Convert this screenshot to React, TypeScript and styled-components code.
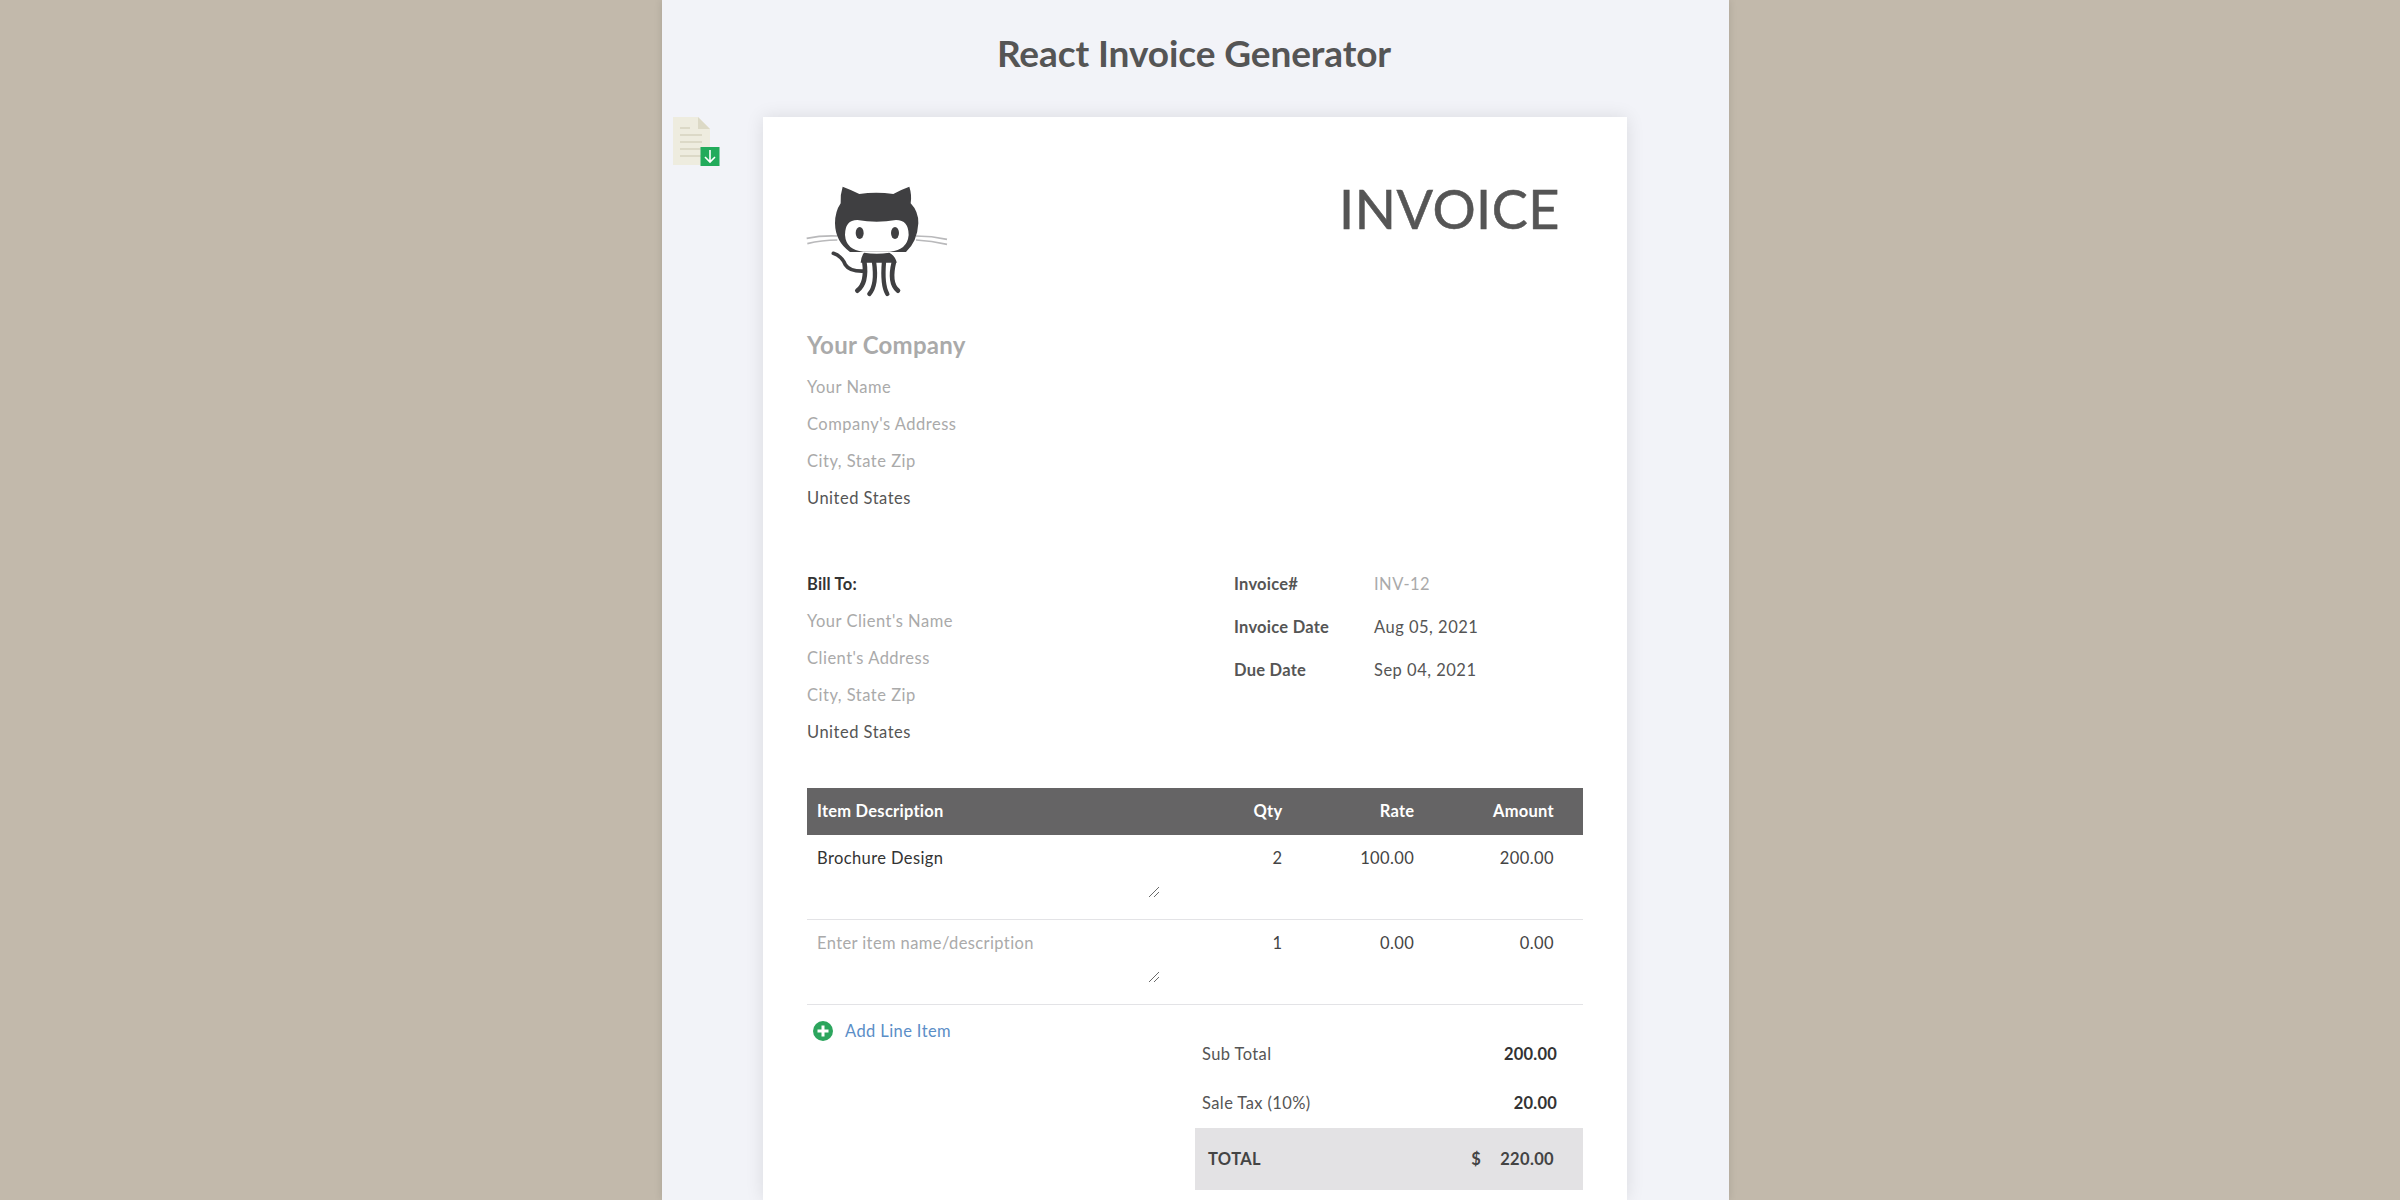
import React from 'react';
import styled, { createGlobalStyle } from 'styled-components';

const Global = createGlobalStyle`
  html, body { margin: 0; padding: 0; height: 1200px; overflow: hidden; background: #c2b9ab; }
  body { font-family: Lato, "Noto Sans", "Liberation Sans", sans-serif; color: #555; }
  * { box-sizing: border-box; }
`;
const Shell = styled.div`height: 1200px; display: flex; justify-content: center; overflow: hidden; padding-right: 9px;`;
const Column = styled.main`
  position: relative; width: 1067px; height: 1200px; background: #f2f3f8;
  box-shadow: 0 0 8px rgba(0,0,0,.12); display: flex; flex-direction: column; align-items: center;
`;
const Title = styled.h1`margin: 0; height: 117px; padding: 31px 3px 0 0; font-size: 37px; line-height: 44px; font-weight: 700; color: #555; letter-spacing: -.1px;`;
const Download = styled.svg`position: absolute; left: 11px; top: 117px;`;
const Page = styled.section`
  width: 864px; flex: 1; margin-right: 1px; background: #fff; padding: 68px 44px 0; box-shadow: 0 0 17px rgba(0,0,0,.1);
  letter-spacing: .4px;
`;
const Top = styled.div`display: flex; justify-content: space-between; align-items: flex-start; height: 143px;`;
const Big = styled.div`font-size: 54px; line-height: 70px; color: #555; padding-right: 23px; margin-top: -11px; letter-spacing: .5px; -webkit-text-stroke: .6px #555;`;
const Company = styled.div`font-size: 24px; line-height: 30px; font-weight: 700; color: #aaa; height: 41px; padding-top: 2px; letter-spacing: .25px;`;
const Line = styled.div<{ $dark?: boolean; $bold?: boolean }>`
  font-size: 16.5px; line-height: 37px; height: 37px; font-weight: ${p => p.$bold ? 700 : 400};
  letter-spacing: ${p => p.$bold ? '.2px' : '.5px'};
  color: ${p => p.$bold ? '#333' : p.$dark ? '#555' : '#aaa'};
`;
const BillGrid = styled.div`display: grid; grid-template-columns: 427px 1fr; margin-top: 49px;`;
const Meta = styled.div`display: grid; grid-template-columns: 140px 1fr; grid-auto-rows: 43px; align-items: center; margin-top: -4px;`;
const MetaLabel = styled.div`font-size: 16.5px; font-weight: 700; color: #555; letter-spacing: .25px;`;
const MetaValue = styled.div<{ $muted?: boolean }>`font-size: 16.5px; letter-spacing: .5px; color: ${p => p.$muted ? '#aaa' : '#555'};`;
const TableHead = styled.div`
  display: grid; grid-template-columns: 48% 17% 17% 18%; height: 47px; margin-top: 37px; background: #656465;
  align-items: center; color: #fff; font-size: 16.5px; font-weight: 700; letter-spacing: .25px; padding-bottom: 1px;
`;
const Row = styled.div`display: grid; grid-template-columns: 48% 17% 17% 18%; height: 85px; border-bottom: 1px solid #e3e3e6; font-size: 16.5px;`;
const LeftCell = styled.div`padding-left: 10px;`;
const RightCell = styled.div`text-align: right; padding: 12px 29px 0 0; line-height: 22px; color: #444;`;
const HeadRight = styled.div`text-align: right; padding-right: 29px;`;
const Desc = styled.div<{ $muted?: boolean }>`
  position: relative; width: 354px; height: 58px; margin-top: 7px; padding: 5px 0 0 10px; line-height: 22px;
  color: ${p => p.$muted ? '#aaa' : '#333'};
`;
const Grip = styled.svg`position: absolute; right: 1px; bottom: 2px;`;
const Bottom = styled.div`display: grid; grid-template-columns: 388px 1fr;`;
const AddLine = styled.div`display: flex; align-items: center; gap: 12px; padding: 10px 0 0 6px; height: 42px; font-size: 16.5px; color: #5b8ec7;`;
const Totals = styled.div`padding-top: 24px;`;
const TotalRow = styled.div`display: flex; justify-content: space-between; align-items: center; height: 49.5px; padding: 0 26px 0 7px; font-size: 16.5px; color: #555;`;
const TotalValue = styled.span`font-weight: 700; color: #333; letter-spacing: .2px;`;
const GrandTotal = styled.div`
  display: flex; align-items: center; height: 62px; padding: 0 29px 0 13px; background: #e3e2e4; color: #444; font-weight: 700; font-size: 16.5px; letter-spacing: .35px;
`;
const GrandLabel = styled.span`flex: 1;`;
const GrandCurrency = styled.span`margin-right: 19px;`;

const Octocat = () => (
  <svg width="160" height="130" viewBox="0 0 480 390" style={{ marginLeft: -7, marginTop: -15 }} aria-hidden>
    <g fill="none" stroke="#b9b9bb" strokeWidth="5">
      <path d="M20 205 Q65 196 112 198" /><path d="M22 221 Q65 210 112 210" />
      <path d="M348 198 Q395 198 441 208" /><path d="M348 210 Q395 212 441 223" />
    </g>
    <path fill="#3f3f41" d="M128 50 Q150 58 178 72 Q228 64 280 72 Q305 58 328 50 Q336 75 332 100 Q356 125 355 160 Q352 215 318 246 H150 Q106 215 105 160 Q105 125 122 100 Q120 75 128 50Z" />
    <path fill="#fff" d="M172 150 Q230 160 288 150 Q326 150 326 195 Q322 240 270 245 H190 Q138 240 135 195 Q135 150 172 150Z" />
    <ellipse cx="179" cy="189" rx="12" ry="18" fill="#3f3f41" />
    <ellipse cx="285" cy="189" rx="12" ry="18" fill="#3f3f41" />
    <path fill="#3f3f41" d="M192 248 Q230 254 268 248 Q286 258 290 278 H182 Q184 258 192 248Z" />
    <g fill="none" stroke="#3f3f41" strokeLinecap="round">
      <path strokeWidth="11" d="M100 250 Q125 258 136 284 Q150 306 196 303" />
      <path strokeWidth="14" d="M193 275 Q202 340 172 362" />
      <path strokeWidth="13" d="M222 275 Q232 345 208 372" />
      <path strokeWidth="13" d="M252 275 Q246 345 262 372" />
      <path strokeWidth="14" d="M282 275 Q266 340 294 362" />
    </g>
  </svg>
);

const DownloadIcon = () => (
  <Download width="47" height="50" viewBox="0 0 47 50" aria-hidden>
    <path fill="#eeecdf" d="M0 0 H25 L37 12 V48 H0Z" />
    <path fill="#dcd9c6" d="M25 0 L37 12 H25Z" />
    <g stroke="#d6d3bf" strokeWidth="1.5">
      <path d="M7 11 H17" /><path d="M7 18 H29" /><path d="M7 25 H29" /><path d="M7 32 H29" /><path d="M7 39 H29" />
    </g>
    <rect x="27.5" y="30" width="19" height="19" fill="#22ab5b" />
    <path d="M37 33 V45 M32 40 L37 45 L42 40" fill="none" stroke="#fff" strokeWidth="1.6" />
  </Download>
);

const PlusIcon = () => (
  <svg width="20" height="20" viewBox="0 0 20 20" aria-hidden>
    <circle cx="10" cy="10" r="10" fill="#2ca55d" />
    <path d="M10 4.5 V15.5 M4.5 10 H15.5" stroke="#fff" strokeWidth="3" />
  </svg>
);

const ResizeGrip = () => (
  <Grip width="12" height="12" viewBox="0 0 12 12" aria-hidden>
    <path d="M1 11 L11 1 M6 11 L11 6" stroke="#6a6a6a" strokeWidth="1" fill="none" />
  </Grip>
);

export default function App() {
  return (
    <Shell>
      <Global />
      <Column>
        <DownloadIcon />
        <Title>React Invoice Generator</Title>
        <Page>
          <Top>
            <Octocat />
            <Big>INVOICE</Big>
          </Top>
          <Company>Your Company</Company>
          <Line>Your Name</Line>
          <Line>Company's Address</Line>
          <Line>City, State Zip</Line>
          <Line $dark>United States</Line>
          <BillGrid>
            <div>
              <Line $bold>Bill To:</Line>
              <Line>Your Client's Name</Line>
              <Line>Client's Address</Line>
              <Line>City, State Zip</Line>
              <Line $dark>United States</Line>
            </div>
            <Meta>
              <MetaLabel>Invoice#</MetaLabel><MetaValue $muted>INV-12</MetaValue>
              <MetaLabel>Invoice Date</MetaLabel><MetaValue>Aug 05, 2021</MetaValue>
              <MetaLabel>Due Date</MetaLabel><MetaValue>Sep 04, 2021</MetaValue>
            </Meta>
          </BillGrid>
          <TableHead>
            <LeftCell>Item Description</LeftCell>
            <HeadRight>Qty</HeadRight>
            <HeadRight>Rate</HeadRight>
            <HeadRight>Amount</HeadRight>
          </TableHead>
          <Row>
            <Desc>Brochure Design<ResizeGrip /></Desc>
            <RightCell>2</RightCell><RightCell>100.00</RightCell><RightCell>200.00</RightCell>
          </Row>
          <Row>
            <Desc $muted>Enter item name/description<ResizeGrip /></Desc>
            <RightCell>1</RightCell><RightCell>0.00</RightCell><RightCell>0.00</RightCell>
          </Row>
          <Bottom>
            <AddLine><PlusIcon />Add Line Item</AddLine>
            <Totals>
              <TotalRow>Sub Total<TotalValue>200.00</TotalValue></TotalRow>
              <TotalRow>Sale Tax (10%)<TotalValue>20.00</TotalValue></TotalRow>
              <GrandTotal>
                <GrandLabel>TOTAL</GrandLabel>
                <GrandCurrency>$</GrandCurrency>
                <span>220.00</span>
              </GrandTotal>
            </Totals>
          </Bottom>
        </Page>
      </Column>
    </Shell>
  );
}
